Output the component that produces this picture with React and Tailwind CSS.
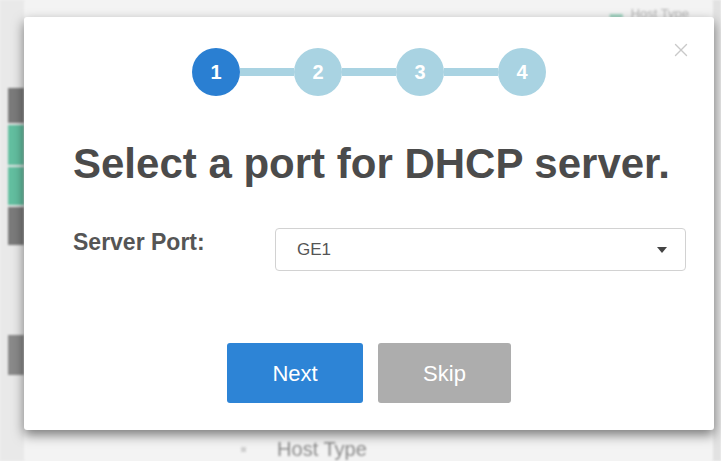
import { X } from 'lucide-react';

const steps = [1, 2, 3, 4];

const Stepper = ({ current }) => (
  <div className="flex items-center justify-center">
    {steps.map((n, i) => (
      <div key={n} className="flex items-center">
        {i > 0 && <div className="w-[54px] h-[8px] bg-[#a9d3e2]"></div>}
        <div
          className={`w-[48px] h-[48px] rounded-full flex items-center justify-center text-white text-[20px] font-bold ${
            n === current ? 'bg-[#2a7fd2]' : 'bg-[#a9d3e2]'
          }`}
        >
          {n}
        </div>
      </div>
    ))}
  </div>
);

const App = () => {
  return (
    <div className="relative w-[721px] h-[461px] overflow-hidden bg-[#f3f3f3] font-['Liberation_Sans',Arial,sans-serif]">
      {/* page underneath the dialog */}
      <div className="flex h-full blur-[1px]">
        <div className="w-[24px] flex flex-col bg-[#e9e9e9] pl-[8px]">
          <div className="h-[88px]"></div>
          <div className="h-[35px] bg-[#7b7b7b]"></div>
          <div className="h-[40px] mt-[2px] bg-[#63bfa0]"></div>
          <div className="h-[38px] mt-[2px] bg-[#63bfa0]"></div>
          <div className="h-[38px] mt-[2px] bg-[#7b7b7b]"></div>
          <div className="h-[90px]"></div>
          <div className="h-[40px] bg-[#8a8a8a]"></div>
        </div>
        <div className="flex-1 flex flex-col">
          <div className="h-[17px] flex justify-end items-start pr-[24px] pt-[4px] gap-2 text-[13px] text-[#b5b5b5]">
            <span className="text-[#9fd3c0]">▬</span>
            <span>Host Type</span>
          </div>
          <div className="flex-1"></div>
          <div className="h-[31px] flex items-start pl-[216px] pt-[4px] gap-[30px] text-[20px] text-[#8a8a8a]">
            <span className="text-[#cfcfcf]">▪</span>
            <span>Host Type</span>
          </div>
        </div>
        <div className="w-[8px] bg-[#e2e2e2]"></div>
      </div>

      {/* wizard dialog */}
      <div className="absolute left-[24px] top-[17px] w-[690px] h-[413px] bg-white rounded-[3px] shadow-[0_5px_12px_rgba(0,0,0,0.5)] flex flex-col">
        <button className="absolute right-[22px] top-[22px] text-[#c9c9c9]">
          <X size={22} strokeWidth={1.5} />
        </button>

        <div className="pt-[31px]">
          <Stepper current={1} />
        </div>

        <h2 className="mt-[44px] pl-[49px] text-[42px] leading-[48px] font-bold text-[#4b4b4b]">
          Select a port for DHCP server.
        </h2>

        <div className="mt-[40px] flex items-center pl-[49px] pr-[28px]">
          <label className="w-[202px] text-[23px] font-bold text-[#555555] -mt-[14px]">Server Port:</label>
          <div className="flex-1 h-[43px] border border-[#d2d2d2] rounded-[4px] flex items-center justify-between pl-[21px] pr-[18px]">
            <span className="text-[17px] text-[#555555]">GE1</span>
            <svg width="10" height="6" viewBox="0 0 10 6">
              <path d="M0 0 L10 0 L5 6 Z" fill="#444444" />
            </svg>
          </div>
        </div>

        <div className="mt-[72px] flex justify-center gap-[15px]">
          <button className="w-[136px] h-[60px] rounded-[3px] bg-[#2d84d6] text-white text-[22px]">Next</button>
          <button className="w-[133px] h-[60px] rounded-[3px] bg-[#adadad] text-white text-[22px]">Skip</button>
        </div>
      </div>
    </div>
  );
};

export default App;
